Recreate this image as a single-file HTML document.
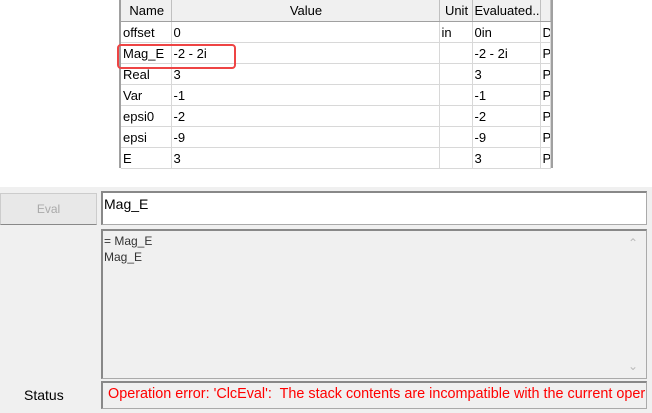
<!DOCTYPE html>
<html><head><style>
body{margin:0;width:652px;height:413px;background:#fff;font-family:"Liberation Sans",Arial,sans-serif;font-size:12px;position:relative;overflow:hidden}
.t{position:absolute;left:119px;top:0;width:434px;height:168px;border-left:2px solid #a0a0a0;border-right:2px solid #a0a0a0;box-sizing:border-box;background:#fff}
table{border-collapse:collapse;width:100%;table-layout:fixed}
td,th{border-right:1px solid #d8d8d8;border-bottom:1px solid #d8d8d8;height:20px;padding:0 0 0 2px;white-space:nowrap;overflow:hidden;font-weight:normal;text-align:left;font-size:13px;color:#000}
th{background:#f0f0f0;border-right:1px solid #c0c0c0;border-bottom:1px solid #a0a0a0;text-align:center;height:21px}
.red{position:absolute;left:117px;top:44px;width:115px;height:21px;border:2px solid #ee4444;border-radius:4px}
.bot{position:absolute;left:0;top:187px;width:652px;height:226px;background:#f0f0f0}
.btn{position:absolute;left:0;top:193px;width:97px;height:32px;background:#e8e8e8;border:1px solid #ccc;border-bottom:1px solid #888;color:#aaa;text-align:center;line-height:31px;box-sizing:border-box}
.box{position:absolute;left:101px;box-sizing:border-box;border:1px solid #aaa;border-top:2px solid #888;border-left:2px solid #888}
</style></head><body>
<div class="t"><table>
<colgroup><col style="width:50px"><col style="width:268px"><col style="width:33px"><col style="width:68px"><col></colgroup>
<tr><th>Name</th><th>Value</th><th>Unit</th><th style="text-align:left">Evaluated...</th><th></th></tr>
<tr><td>offset</td><td>0</td><td>in</td><td>0in</td><td>D</td></tr>
<tr><td>Mag_E</td><td>-2 - 2i</td><td></td><td>-2 - 2i</td><td>P</td></tr>
<tr><td>Real</td><td>3</td><td></td><td>3</td><td>P</td></tr>
<tr><td>Var</td><td>-1</td><td></td><td>-1</td><td>P</td></tr>
<tr><td>epsi0</td><td>-2</td><td></td><td>-2</td><td>P</td></tr>
<tr><td>epsi</td><td>-9</td><td></td><td>-9</td><td>P</td></tr>
<tr><td>E</td><td>3</td><td></td><td>3</td><td>P</td></tr>
</table></div>
<div class="red"></div>
<div class="bot"></div>
<div class="btn">Eval</div>
<div class="box" style="top:191px;width:546px;height:34px;background:#fff;font-size:14px;padding:3px 0 0 1px">Mag_E</div>
<div class="box" style="top:229px;width:546px;height:150px;background:#f0f0f0;color:#333;padding:2px 0 0 1px;line-height:16px">= Mag_E<br>Mag_E
<span style="position:absolute;right:8px;top:4px;color:#bbb;font-size:12px">&#8963;</span>
<span style="position:absolute;right:8px;bottom:4px;color:#bbb;font-size:12px">&#8964;</span></div>
<div style="position:absolute;left:24px;top:387px;font-size:14px">Status</div>
<div class="box" style="top:381px;width:546px;height:28px;background:#f0f0f0;color:#f00;font-size:14.4px;padding:3px 0 0 5px;white-space:nowrap;overflow:hidden">Operation error: 'ClcEval':&nbsp; The stack contents are incompatible with the current oper</div>
</body></html>
